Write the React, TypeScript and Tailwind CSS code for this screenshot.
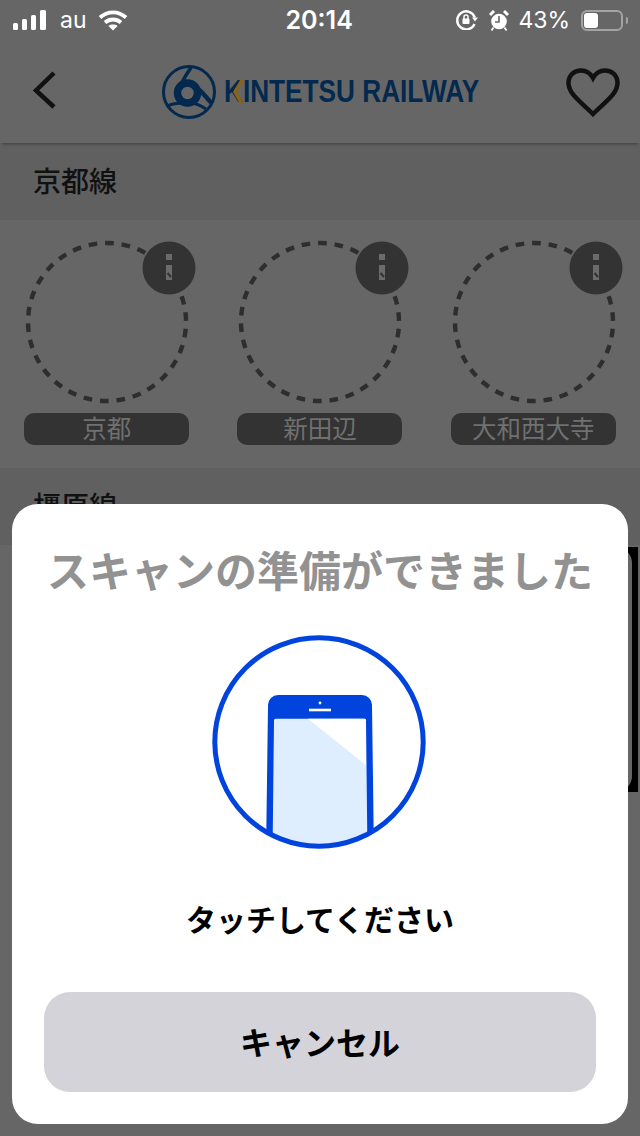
const stations = ["京都", "新田辺", "大和西大寺"];

function StationCell({ name }: { name: string }) {
  return (
    <div className="flex flex-col items-center">
      <svg width="213" height="168" viewBox="0 238 213 168" className="block">
        <circle cx="107" cy="322" r="79" fill="none" stroke="#2e2e2e" strokeWidth="4.4" strokeDasharray="8.6 7.9" transform="rotate(-31 107 322)" />
        <circle cx="169" cy="268" r="26.5" fill="#333" />
        <rect x="166" y="254" width="6" height="6" fill="#6b6b6b" />
        <rect x="166" y="265" width="6" height="15" fill="#6b6b6b" />
        <path d="M167.500 273l3.500 4" stroke="#333" strokeWidth="2" fill="none" />
      </svg>
      <div className="mt-[7px] flex h-8 w-[165px] items-center justify-center rounded-[10px] bg-[#333] pb-[3px] text-[24.500px] leading-8 text-[#707070]">
        {name}
      </div>
    </div>
  );
}

function StatusBar() {
  return (
    <div className="flex h-10 items-center pl-[13px] pr-[11px] font-['Inter',sans-serif] text-white">
      <svg width="33" height="21" viewBox="0 0 33 21" fill="#fff" className="block">
        <rect x="0" y="13" width="5" height="7" rx="1.500" />
        <rect x="9" y="9" width="5" height="11" rx="1.500" />
        <rect x="18" y="5" width="5" height="15" rx="1.500" />
        <rect x="27" y="0" width="6" height="20" rx="1.500" />
      </svg>
      <span className="ml-[14px] text-[23px] leading-none">au</span>
      <svg width="30" height="21" viewBox="0 0 30 21" className="ml-[11px] block" fill="none" stroke="#fff" strokeWidth="3.800">
        <path d="M2 7.500C9.500 .6 20.500 .6 28 7.500" />
        <path d="M7 12.500C11.700 8.500 18.300 8.500 23 12.500" />
        <path d="M15 20.500l-4.600-4.600c2.600-1.900 6.600-1.900 9.200 0z" fill="#fff" stroke="none" />
      </svg>
      <span className="ml-[158px] w-[69px] text-[25px] font-semibold leading-none">20:14</span>
      <svg width="22" height="20" viewBox="0 0 22 20" className="ml-[101px] block" fill="none" stroke="#fff" strokeWidth="2.400">
        <path d="M18.500 14A9 9 0 1 1 18.800 7.500" />
        <path d="M16 7.500h6l-3 4z" fill="#fff" stroke="none" />
        <rect x="6.500" y="8.500" width="7" height="5.500" rx="1" fill="#fff" stroke="none" />
        <path d="M8 9V7a2 2 0 0 1 4 0v2" strokeWidth="1.500" />
      </svg>
      <svg width="20" height="21" viewBox="0 0 20 21" className="ml-[11px] block">
        <circle cx="10" cy="11.500" r="7.800" fill="#fff" />
        <path d="M10 6v6H6" stroke="#666" strokeWidth="1.600" fill="none" />
        <path d="M1 5l4-4M19 5l-4-4" stroke="#fff" strokeWidth="3" />
        <path d="M4.500 17.500l-2 3M15.500 17.500l2 3" stroke="#fff" strokeWidth="1.800" />
      </svg>
      <span className="ml-[10px] text-[23px] leading-none">43%</span>
      <div className="ml-[11px] h-[21px] w-[42px] rounded-[6px] border-2 border-[#a3a3a3] p-[1px]">
        <div className="h-[15px] w-[14px] rounded-[3px] bg-white" />
      </div>
      <div className="ml-[3px] h-[7px] w-[2px] rounded-r-sm bg-[#a3a3a3]" />
    </div>
  );
}

function KintetsuMark() {
  return (
    <svg width="56" height="56" viewBox="0 0 56 56" fill="none" stroke="#03294f" className="block">
      <circle cx="28" cy="28" r="25.500" strokeWidth="3" />
      <circle cx="26.500" cy="29" r="10" strokeWidth="7.500" />
      <path d="M30 3.500C26 10 22 15 19.500 22" strokeWidth="3.500" />
      <path d="M34.500 24c5 .5 9 8 16 15" strokeWidth="4.500" />
      <path d="M6 42c8-4 16-3 23-3 6 0 10 2 16 6" strokeWidth="3" />
    </svg>
  );
}

function ScanIllustration() {
  return (
    <svg width="220" height="220" viewBox="210 632 220 220" className="block">
      <defs>
        <clipPath id="inside">
          <circle cx="319" cy="742" r="105" />
        </clipPath>
      </defs>
      <g clipPath="url(#inside)">
        <path d="M278 695h84a10 10 0 0 1 10 10l2 150h-108l2-150a10 10 0 0 1 10-10z" fill="#0044dd" />
        <path d="M275.500 718.700h89a1.500 1.500 0 0 1 1.500 1.500l1.500 135h-95l1.500-135a1.500 1.500 0 0 1 1.500-1.500z" fill="#dfeeff" />
        <path d="M308 718.700h56.500a1.500 1.500 0 0 1 1.500 1.500v45z" fill="#fff" />
        <rect x="309" y="708.700" width="22" height="2.600" fill="#fff" />
        <circle cx="320" cy="703" r="1.400" fill="#fff" />
      </g>
      <circle cx="319" cy="742" r="104.200" fill="none" stroke="#0044dd" strokeWidth="5" />
    </svg>
  );
}

export default function App() {
  return (
    <div className="relative h-[1136px] w-[640px] overflow-hidden bg-[#666] font-['Noto_Sans_CJK_JP',sans-serif]">
      <StatusBar />

      <header className="relative flex h-[103px] items-center justify-between pl-[33px] pr-[20px] shadow-[0_3px_3px_-2px_rgba(0,0,0,0.35)]">
        <svg width="24" height="38" viewBox="0 0 24 38" fill="none" stroke="#111" strokeWidth="4.500" className="block -translate-y-[2px]">
          <path d="M21 2L3 19.500L21 36" />
        </svg>
        <div className="flex translate-x-[7px] items-center">
          <KintetsuMark />
          <div className="relative ml-[7px] w-[253px]">
            <span className="block origin-left scale-x-[0.845] whitespace-nowrap font-['Liberation_Sans',sans-serif] text-[31px] font-bold leading-[32px] text-[#03294f]">
              KINTETSU RAILWAY
            </span>
            <svg width="14" height="24" viewBox="0 0 14 24" className="absolute left-[7px] top-[4px] block">
              <path d="M9 0h4L6 12l7 12H9L2 12z" fill="#8a6414" />
            </svg>
          </div>
        </div>
        <svg width="54" height="50" viewBox="0 0 54 50" fill="none" stroke="#111" strokeWidth="4.500" className="block translate-y-[1px]">
          <path d="M27 46C15 34 2.500 26 2.500 15 2.500 7.500 8 2.500 15 2.500c5.500 0 9.500 3 12 7.500 2.500-4.500 6.500-7.500 12-7.500 7 0 12.500 5 12.500 12.500C51.500 26 39 34 27 46z" />
        </svg>
      </header>

      <section>
        <h2 className="flex h-[77px] items-center bg-[#606060] pb-[3px] pl-[33px] text-[28px] font-medium text-[#111]">京都線</h2>
        <div className="grid h-[248px] grid-cols-3 pt-[18px]">
          {stations.map((name) => (
            <StationCell key={name} name={name} />
          ))}
        </div>
      </section>

      <section>
        <h2 className="flex h-[77px] items-center bg-[#606060] pb-[3px] pl-[33px] text-[28px] font-medium text-[#111]">橿原線</h2>
        <div className="ml-[100px] mr-[2px] mt-[2px] h-[245px] bg-black pr-[6px]">
          <div className="h-full rounded-r-[16px] bg-[#666]" />
        </div>
      </section>

      <div className="absolute left-3 top-[504px] flex h-[620px] w-[616px] flex-col items-center rounded-[26px] bg-white">
        <h1 className="mt-[34px] whitespace-nowrap text-[42px] font-bold leading-[62px] text-[#929292]">スキャンの準備ができました</h1>
        <div className="mt-[32px]">
          <ScanIllustration />
        </div>
        <p className="mt-[44px] text-[30px] font-bold leading-[44px] text-black">タッチしてください</p>
        <button className="mt-[52px] flex h-[100px] w-[552px] items-center justify-center rounded-[26px] bg-[#d4d3da] pb-[2px] text-[32px] font-bold text-black">
          キャンセル
        </button>
      </div>
    </div>
  );
}
